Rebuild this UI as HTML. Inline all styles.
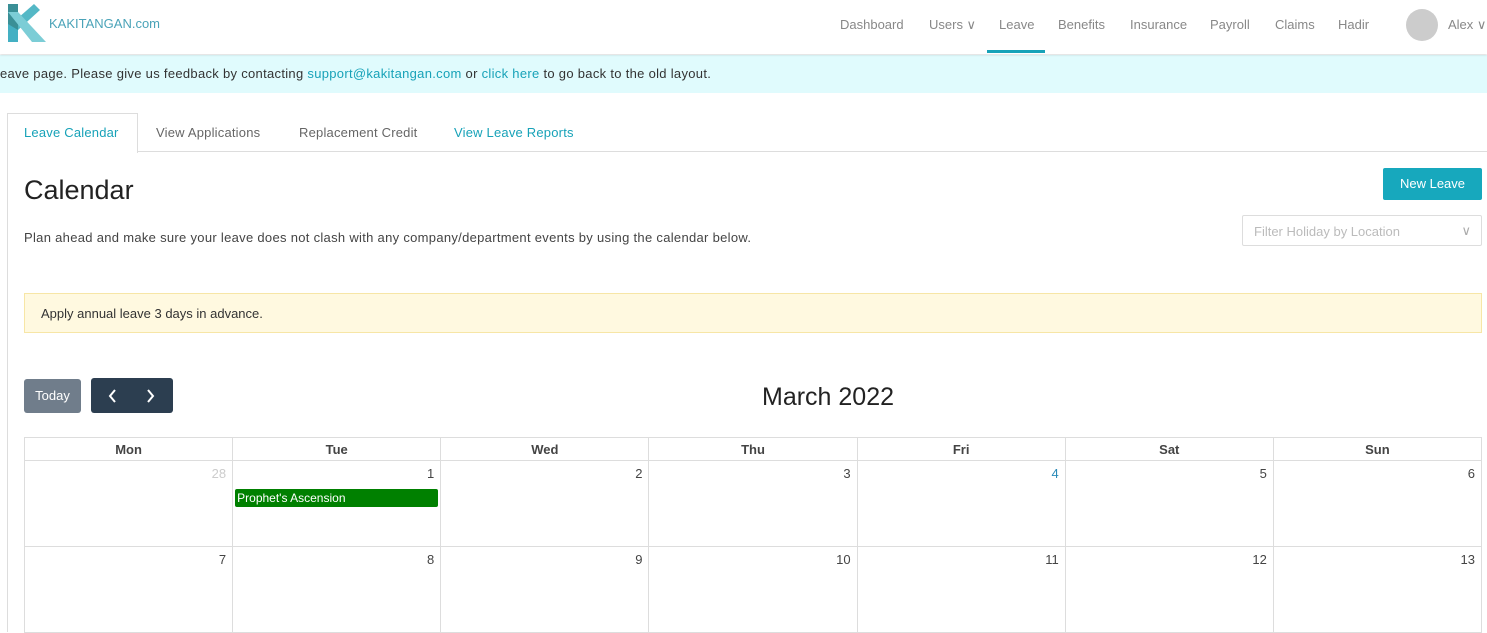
<!DOCTYPE html>
<html><head><style>
*{box-sizing:border-box;margin:0;padding:0}
body{width:1487px;height:632px;overflow:hidden;background:#fff;font-family:"Liberation Sans",sans-serif;color:#333;position:relative}
.a{position:absolute}
.hdr{left:0;top:0;width:1487px;height:54px;background:#fff;box-shadow:0 1px 2px rgba(0,0,0,.15);z-index:2}
.nav{top:17px;font-size:13px;color:#888}
.banner{left:0;top:55px;width:1487px;height:38px;background:#e0fbfd;font-size:13px;color:#333;padding:11px 0 0 0;letter-spacing:0.3px}
.banner span{color:#17a2b8}
.tabs{left:7px;top:151px;width:1480px;border-top:1px solid #ddd}
.tab{top:125px;font-size:13px;color:#666;letter-spacing:0.2px}
table{position:absolute;left:24px;top:437px;width:1458px;border-collapse:collapse;table-layout:fixed}
td,th{border:1px solid #ddd;font-size:13px}
th{height:23px;color:#444;font-weight:bold}
td{height:86px;vertical-align:top;text-align:right;padding:5px 6px 0 0;color:#444}
</style></head><body>
<div class="a hdr">
<svg class="a" style="left:6px;top:4px" width="40" height="38" viewBox="0 0 40 38">
<polygon points="2,0 12,0 12,38 2,38" fill="#3a8f96"/>
<polygon points="12,14 28,0 34,6 12,26" fill="#54b8c6"/>
<polygon points="2,8 12,8 40,38 26,38" fill="#7ccdd6"/>
<polygon points="2,20 12,26 12,38 2,38" fill="#44b0c3"/>
</svg>
<div class="a" style="left:49px;top:16px;font-size:13px;color:#4aa3b8">KAKITANGAN.com</div>
<div class="a nav" style="left:840px">Dashboard</div>
<div class="a nav" style="left:929px">Users ∨</div>
<div class="a nav" style="left:999px">Leave</div>
<div class="a" style="left:987px;top:50px;width:58px;height:3px;background:#17a2b8"></div>
<div class="a nav" style="left:1058px">Benefits</div>
<div class="a nav" style="left:1130px">Insurance</div>
<div class="a nav" style="left:1210px">Payroll</div>
<div class="a nav" style="left:1275px">Claims</div>
<div class="a nav" style="left:1338px">Hadir</div>
<div class="a" style="left:1406px;top:9px;width:32px;height:32px;border-radius:50%;background:#ccc"></div>
<div class="a nav" style="left:1448px">Alex ∨</div>
</div>
<div class="a banner">eave page. Please give us feedback by contacting <span>support@kakitangan.com</span> or <span>click here</span> to go back to the old layout.</div>
<div class="a tabs"></div>
<div class="a" style="left:7px;top:113px;width:131px;height:40px;border:1px solid #ddd;border-bottom:none;background:#fff"></div>
<div class="a" style="left:7px;top:152px;width:1px;height:480px;background:#ddd"></div>
<div class="a tab" style="left:24px;color:#17a2b8">Leave Calendar</div>
<div class="a tab" style="left:156px">View Applications</div>
<div class="a tab" style="left:299px">Replacement Credit</div>
<div class="a tab" style="left:454px;color:#17a2b8">View Leave Reports</div>
<div class="a" style="left:24px;top:175px;font-size:27px;color:#222">Calendar</div>
<div class="a" style="left:24px;top:230px;font-size:13px;color:#444;letter-spacing:0.3px">Plan ahead and make sure your leave does not clash with any company/department events by using the calendar below.</div>
<div class="a" style="left:1383px;top:168px;width:99px;height:32px;background:#17a8bd;color:#fff;font-size:13px;text-align:center;line-height:32px;border-radius:2px">New Leave</div>
<div class="a" style="left:1242px;top:215px;width:240px;height:31px;border:1px solid #ddd;border-radius:2px;font-size:13px;color:#bbb;padding:8px 0 0 11px">Filter Holiday by Location<span style="position:absolute;right:10px;top:7px;color:#aaa">∨</span></div>
<div class="a" style="left:24px;top:293px;width:1458px;height:40px;background:#fff9e0;border:1px solid #f7e6a6;font-size:13px;color:#333;padding:12px 0 0 16px">Apply annual leave 3 days in advance.</div>
<div class="a" style="left:24px;top:379px;width:57px;height:34px;background:#707d8b;border-radius:3px;color:#fff;font-size:13px;text-align:center;line-height:34px">Today</div>
<div class="a" style="left:91px;top:378px;width:82px;height:35px;background:#2c3e50;border-radius:3px">
<svg class="a" style="left:16px;top:11px" width="50" height="14"><path d="M8 1L3 7L8 13M41 1L46 7L41 13" stroke="#fff" stroke-width="2" fill="none"/></svg></div>
<div class="a" style="left:762px;top:383px;font-size:25px;color:#222">March 2022</div>
<table>
<tr><th>Mon</th><th>Tue</th><th>Wed</th><th>Thu</th><th>Fri</th><th>Sat</th><th>Sun</th></tr>
<tr><td style="color:#ccc">28</td><td style="position:relative">1<div style="position:absolute;left:2px;top:28px;right:2px;height:18px;background:#008000;color:#fff;font-size:12px;text-align:left;padding:2px 2px;border-radius:2px">Prophet's Ascension</div></td><td>2</td><td>3</td><td style="color:#2a8ab8">4</td><td>5</td><td>6</td></tr>
<tr><td>7</td><td>8</td><td>9</td><td>10</td><td>11</td><td>12</td><td>13</td></tr>
</table>
</body></html>
